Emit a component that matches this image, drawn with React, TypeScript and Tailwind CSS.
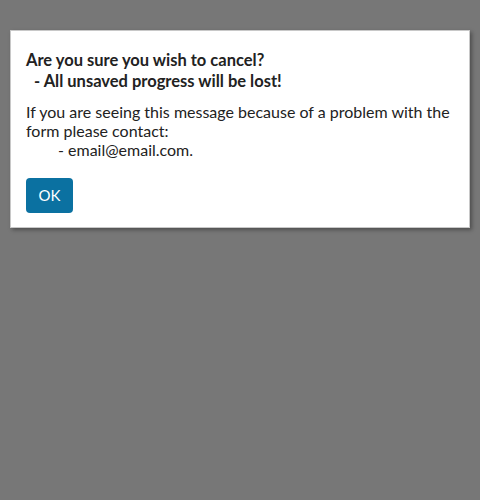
import React from 'react';

const App: React.FC = () => {
  return (
    <div className="min-h-[500px] w-full bg-[#777777] pt-[30px] px-[10px] font-['Lato',sans-serif]">
      <div className="bg-white border border-[#c8c8c8] shadow-[2px_2px_4px_rgba(0,0,0,0.35)] px-[15px] pt-[19px] pb-[14px]">
        <h2 className="text-[16.5px] leading-[21px] font-bold text-[#222222] whitespace-pre">
          {'Are you sure you wish to cancel?\n  - All unsaved progress will be lost!'}
        </h2>
        <p className="mt-[10px] text-[16px] leading-[19px] text-[#222222]">
          If you are seeing this message because of a problem with the form please contact:
        </p>
        <p className="text-[16px] leading-[19px] text-[#222222] pl-[32px]">- email@email.com.</p>
        <button className="mt-[19px] w-[47px] h-[35px] rounded-[4px] bg-[#0b71a1] text-white text-[15px] leading-none">
          OK
        </button>
      </div>
    </div>
  );
};

export default App;
